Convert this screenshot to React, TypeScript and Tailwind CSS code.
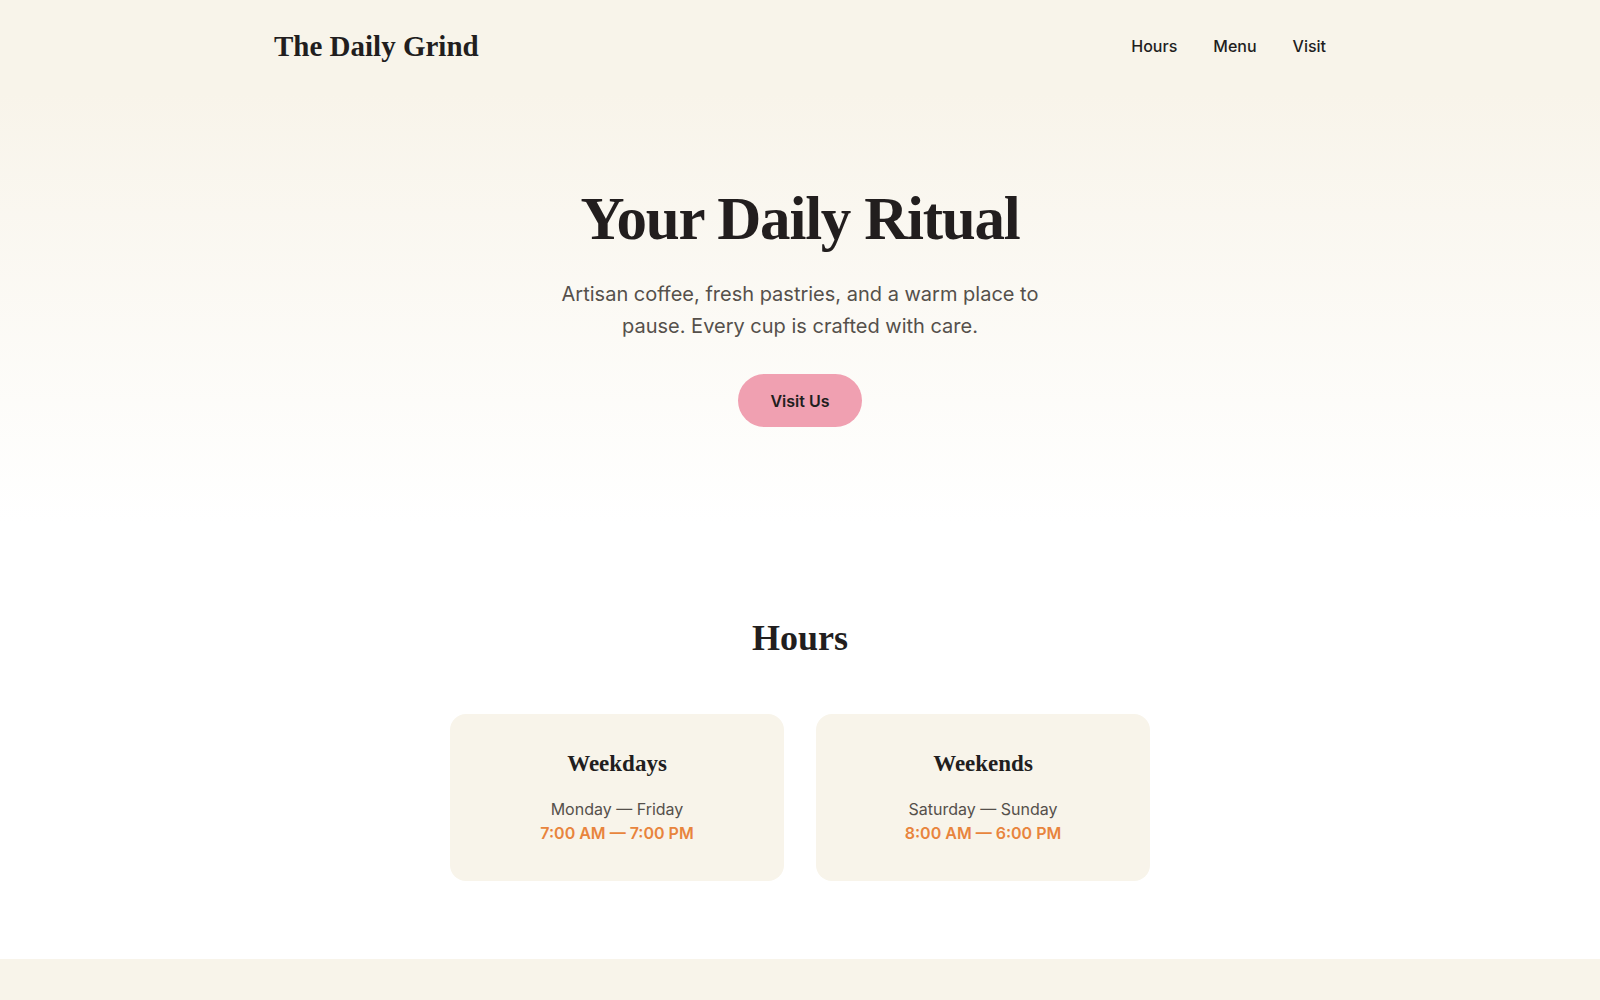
import React from "react";

const serif = { fontFamily: '"Liberation Serif", "Times New Roman", serif' };

function HoursCard({ title, days, time }: { title: string; days: string; time: string }) {
  return (
    <div className="rounded-2xl bg-[#f8f4ea] pt-9 pb-9 text-center">
      <h3 className="text-[23px] font-bold leading-[1.2] text-[#221e1e]" style={serif}>
        {title}
      </h3>
      <p className="mt-[19px] text-base leading-6 text-[#55504b]">{days}</p>
      <p className="text-base font-semibold leading-6 text-[#e8843d]">{time}</p>
    </div>
  );
}

export default function App() {
  return (
    <div className="min-h-screen bg-white text-[#221e1e]" style={{ fontFamily: 'Inter, "Noto Sans", sans-serif' }}>
      <header className="bg-[#f8f4ea]">
        <div className="mx-auto flex h-[92px] max-w-[1100px] items-center justify-between px-6">
          <a className="text-[29px] font-bold leading-none text-[#221e1e]" style={serif}>
            The Daily Grind
          </a>
          <nav className="flex items-center gap-9 text-base font-medium text-[#221e1e]">
            <a>Hours</a>
            <a>Menu</a>
            <a>Visit</a>
          </nav>
        </div>
      </header>

      <section className="bg-gradient-to-b from-[#f8f4ea] to-white pt-[93px] pb-24 text-center">
        <h1 className="text-[61px] font-bold leading-[1.1] tracking-[-0.02em] text-[#221e1e]" style={serif}>
          Your Daily Ritual
        </h1>
        <p className="mx-auto mt-[26px] max-w-[490px] text-xl leading-8 text-[#55504b]">
          Artisan coffee, fresh pastries, and a warm place to pause. Every cup is crafted with care.
        </p>
        <button className="mt-8 inline-flex h-[53px] items-center rounded-full bg-[#f0a0b1] px-8 text-base font-semibold text-[#221e1e]">
          Visit Us
        </button>
      </section>

      <section className="pt-[94px] pb-[78px]">
        <h2 className="text-center text-[36px] font-bold leading-[1.2] text-[#221e1e]" style={serif}>
          Hours
        </h2>
        <div className="mx-auto mt-[54px] grid max-w-[700px] grid-cols-2 gap-8">
          <HoursCard title="Weekdays" days="Monday — Friday" time="7:00 AM — 7:00 PM" />
          <HoursCard title="Weekends" days="Saturday — Sunday" time="8:00 AM — 6:00 PM" />
        </div>
      </section>

      <footer className="h-[120px] bg-[#f8f4ea]" />
    </div>
  );
}
